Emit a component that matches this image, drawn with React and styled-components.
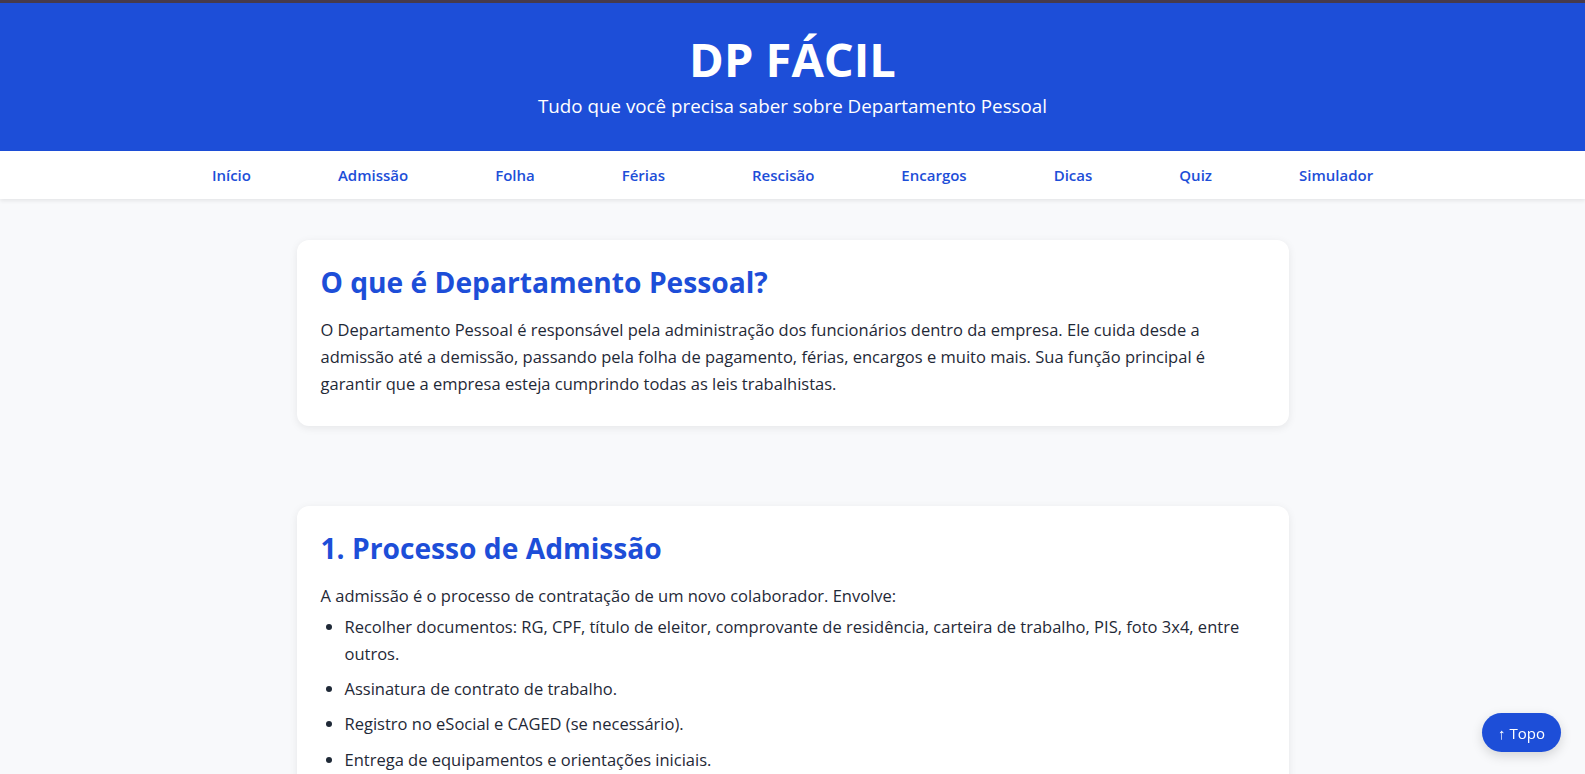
import React from 'react'
import styled, { createGlobalStyle } from 'styled-components'

const blue = '#1d4ed8'

const GlobalStyle = createGlobalStyle`
  * {
    box-sizing: border-box;
  }

  body {
    margin: 0;
    background: #f8f9fb;
    color: #1f2937;
    font-family: 'Open Sans', 'Noto Sans', sans-serif;
  }
`

const Header = styled.header`
  background: ${blue};
  border-top: 3px solid #463a4c;
  color: white;
  text-align: center;
  padding: 28px 20px 31px;
`

const Title = styled.h1`
  margin: 0 0 5px;
  font-size: 47px;
  font-weight: 700;
  line-height: 57px;
`

const Subtitle = styled.p`
  margin: 0;
  font-size: 18.8px;
  line-height: 27px;
`

const Nav = styled.nav`
  position: relative;
  background: white;
  height: 48px;
  display: flex;
  justify-content: center;
  align-items: center;
  gap: 87px;
  box-shadow: 0 2px 4px rgba(0, 0, 0, 0.08);
`

const NavLink = styled.a`
  color: ${blue};
  font-size: 15px;
  font-weight: 600;
  text-decoration: none;
  cursor: pointer;
`

const Main = styled.main`
  display: flex;
  flex-direction: column;
  gap: 80px;
  padding: 41px 20px 80px;
`

const Card = styled.section`
  width: 100%;
  max-width: 992px;
  margin: 0 auto;
  background: white;
  border-radius: 12px;
  padding: 25px 24px 24px;
  box-shadow: 0 2px 8px rgba(0, 0, 0, 0.08);
`

const Heading = styled.h2`
  margin: 0 0 17px;
  color: ${blue};
  font-size: 28.2px;
  font-weight: 700;
  line-height: 34px;
`

const Text = styled.p`
  margin: 0 0 4px;
  font-size: 16.5px;
  line-height: 27.2px;
`

const List = styled.ul`
  margin: 0;
  padding-left: 24px;
`

const Item = styled.li`
  font-size: 16.5px;
  line-height: 27.2px;
  margin-bottom: 8px;
`

const TopButton = styled.button`
  position: fixed;
  right: 24px;
  bottom: 22px;
  height: 39px;
  padding: 0 16px;
  border: none;
  border-radius: 999px;
  background: ${blue};
  color: white;
  font-family: inherit;
  font-size: 15px;
  box-shadow: 0 4px 12px rgba(0, 0, 0, 0.15);
  cursor: pointer;
`

const links = ['Início', 'Admissão', 'Folha', 'Férias', 'Rescisão', 'Encargos', 'Dicas', 'Quiz', 'Simulador']

const admissao = [
  'Recolher documentos: RG, CPF, título de eleitor, comprovante de residência, carteira de trabalho, PIS, foto 3x4, entre outros.',
  'Assinatura de contrato de trabalho.',
  'Registro no eSocial e CAGED (se necessário).',
  'Entrega de equipamentos e orientações iniciais.',
]

export default function App() {
  return (
    <>
      <GlobalStyle />
      <Header>
        <Title>DP FÁCIL</Title>
        <Subtitle>Tudo que você precisa saber sobre Departamento Pessoal</Subtitle>
      </Header>

      <Nav>
        {links.map(link => (
          <NavLink key={link}>{link}</NavLink>
        ))}
      </Nav>

      <Main>
        <Card>
          <Heading>O que é Departamento Pessoal?</Heading>
          <Text>
            O Departamento Pessoal é responsável pela administração dos funcionários dentro da empresa. Ele cuida
            desde a admissão até a demissão, passando pela folha de pagamento, férias, encargos e muito mais. Sua
            função principal é garantir que a empresa esteja cumprindo todas as leis trabalhistas.
          </Text>
        </Card>

        <Card>
          <Heading>1. Processo de Admissão</Heading>
          <Text>A admissão é o processo de contratação de um novo colaborador. Envolve:</Text>
          <List>
            {admissao.map(item => (
              <Item key={item}>{item}</Item>
            ))}
          </List>
        </Card>
      </Main>

      <TopButton>↑ Topo</TopButton>
    </>
  )
}
